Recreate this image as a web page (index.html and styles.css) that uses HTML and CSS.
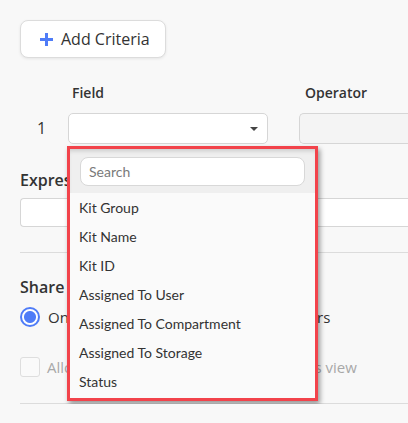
FILE: index.html
```html
<!DOCTYPE html>
<html>
<head>
<meta charset="utf-8">
<link rel="stylesheet" href="styles.css">
</head>
<body>
<div class="page">
  <button class="btn-add">
    <svg class="plus" width="13" height="13" viewBox="0 0 13 13"><rect x="5" y="0" width="3" height="13" fill="#4f7cf7"/><rect x="0" y="5" width="13" height="3" fill="#4f7cf7"/></svg>
    <span>Add Criteria</span>
  </button>

  <div class="crit-head">
    <div class="col-num"></div>
    <div class="col-field"><span class="lbl">Field</span></div>
    <div class="col-op"><span class="lbl">Operator</span></div>
  </div>

  <div class="crit-row">
    <div class="col-num num">1</div>
    <div class="col-field">
      <div class="select">
        <span class="caret"></span>
      </div>
      <div class="dropdown">
        <div class="dd-search">
          <input class="dd-input" type="text" placeholder="Search">
        </div>
        <ul class="dd-list">
          <li>Kit Group</li>
          <li>Kit Name</li>
          <li>Kit ID</li>
          <li>Assigned To User</li>
          <li>Assigned To Compartment</li>
          <li>Assigned To Storage</li>
          <li>Status</li>
        </ul>
      </div>
    </div>
    <div class="col-op"><div class="op-input"></div></div>
  </div>

  <div class="section-lbl expr-lbl">Expression</div>
  <div class="expr-input"></div>

  <hr class="divider">

  <div class="section-lbl share-lbl">Share</div>
  <div class="radio-row">
    <span class="radio on"></span><span class="opt">Only me</span>
    <span class="radio second"></span><span class="opt">All users</span>
  </div>
  <div class="check-row">
    <span class="check"></span><span class="opt disabled">Allow all other users to fully modify this view</span>
  </div>
  <hr class="divider last">
</div>
</body>
</html>
```
FILE: styles.css
```css
html, body {
  margin: 0;
  padding: 0;
  background: #f8f8f8;
  font-family: "Open Sans", "Liberation Sans", sans-serif;
  color: #333;
  overflow: hidden;
}
.page {
  padding: 20px 0 0 20px;
  width: 100%;
  box-sizing: border-box;
}
.btn-add {
  display: flex;
  align-items: center;
  gap: 8px;
  height: 38px;
  width: 146px;
  padding: 0 0 0 19px;
  background: #fff;
  border: 1px solid #dcdcdc;
  border-radius: 8px;
  box-shadow: 0 1px 3px rgba(0,0,0,0.08);
  font-family: "Open Sans", sans-serif;
  font-size: 16px;
  color: #333;
  box-sizing: border-box;
}
.plus { flex: none; }
.crit-head, .crit-row {
  display: flex;
}
.crit-head {
  margin-top: 24px;
  height: 20px;
  align-items: center;
}
.col-num { width: 48px; flex: none; }
.col-field { width: 200px; flex: none; position: relative; }
.col-op { margin-left: 31px; flex: 1; min-width: 0; }
.lbl {
  font-weight: 600;
  font-size: 14px;
  line-height: 20px;
  padding-left: 4px;
}
.col-op .lbl { padding-left: 6px; }
.crit-row {
  margin-top: 11px;
  height: 31px;
}
.num {
  font-size: 16px;
  line-height: 31px;
  padding-left: 17px;
  box-sizing: border-box;
}
.select {
  height: 31px;
  box-sizing: border-box;
  background: #fff;
  border: 1px solid #d6d6d6;
  border-radius: 5px;
  position: relative;
}
.caret {
  position: absolute;
  right: 9px;
  top: 13px;
  width: 0;
  height: 0;
  border-left: 4px solid transparent;
  border-right: 4px solid transparent;
  border-top: 4px solid #444;
}
.op-input {
  height: 31px;
  box-sizing: border-box;
  background: #f4f4f4;
  border: 1px solid #d6d6d6;
  border-right: none;
  border-radius: 5px 0 0 5px;
}
.dropdown {
  position: absolute;
  left: -1px;
  top: 33px;
  width: 251px;
  box-sizing: border-box;
  border: 3px solid #f2434b;
  background: #fafafa;
  box-shadow: 2px 3px 5px rgba(0,0,0,0.4);
  z-index: 10;
  font-family: Lato, "Open Sans", sans-serif;
}
.dd-search {
  background: #efefef;
  height: 44px;
  padding: 8px 10px 0 10px;
  box-sizing: border-box;
  box-shadow: inset 0 4px 4px -2px rgba(0,0,0,0.15);
}
.dd-input {
  display: block;
  width: 100%;
  height: 29px;
  box-sizing: border-box;
  border: 1px solid #d8d8d8;
  border-radius: 8px;
  background: #fff;
  padding: 0 8px;
  font-family: Lato, sans-serif;
  font-size: 14px;
  outline: none;
}
.dd-input::placeholder { color: #7a7a7a; }
.dd-list {
  list-style: none;
  margin: 0;
  padding: 0 0 2px 0;
}
.dd-list li {
  height: 29px;
  line-height: 29px;
  padding-left: 9px;
  font-size: 14px;
  color: #333;
}
.section-lbl {
  font-weight: 600;
  font-size: 16px;
  line-height: 20px;
}
.expr-lbl { margin-top: 26px; }
.expr-input {
  margin-top: 8px;
  height: 29px;
  box-sizing: border-box;
  background: #fff;
  border: 1px solid #d6d6d6;
  border-right: none;
  border-radius: 4px 0 0 4px;
}
.divider {
  border: none;
  border-top: 1px solid #dcdcdc;
  margin: 25px 0 0 0;
  height: 0;
}
.share-lbl { margin-top: 24px; }
.radio-row {
  margin-top: 10px;
  display: flex;
  align-items: center;
  height: 20px;
}
.radio {
  width: 20px;
  height: 20px;
  box-sizing: border-box;
  border-radius: 50%;
  border: 1px solid #c8c8c8;
  background: #fff;
  flex: none;
}
.radio.on {
  border: 2px solid #4f7cf7;
  background: radial-gradient(circle, #4f7cf7 0 5.5px, #fff 6.5px);
}
.radio.second { margin-left: 137px; }
.opt {
  font-size: 15px;
  margin-left: 8px;
  white-space: nowrap;
}
.check-row {
  margin-top: 30px;
  display: flex;
  align-items: center;
  height: 20px;
}
.check {
  width: 20px;
  height: 20px;
  box-sizing: border-box;
  border: 1px solid #dedede;
  border-radius: 3px;
  background: #fafafa;
  flex: none;
}
.opt.disabled { color: #a8a8a8; margin-left: 7px; }
.divider.last { margin-top: 26px; }
```
